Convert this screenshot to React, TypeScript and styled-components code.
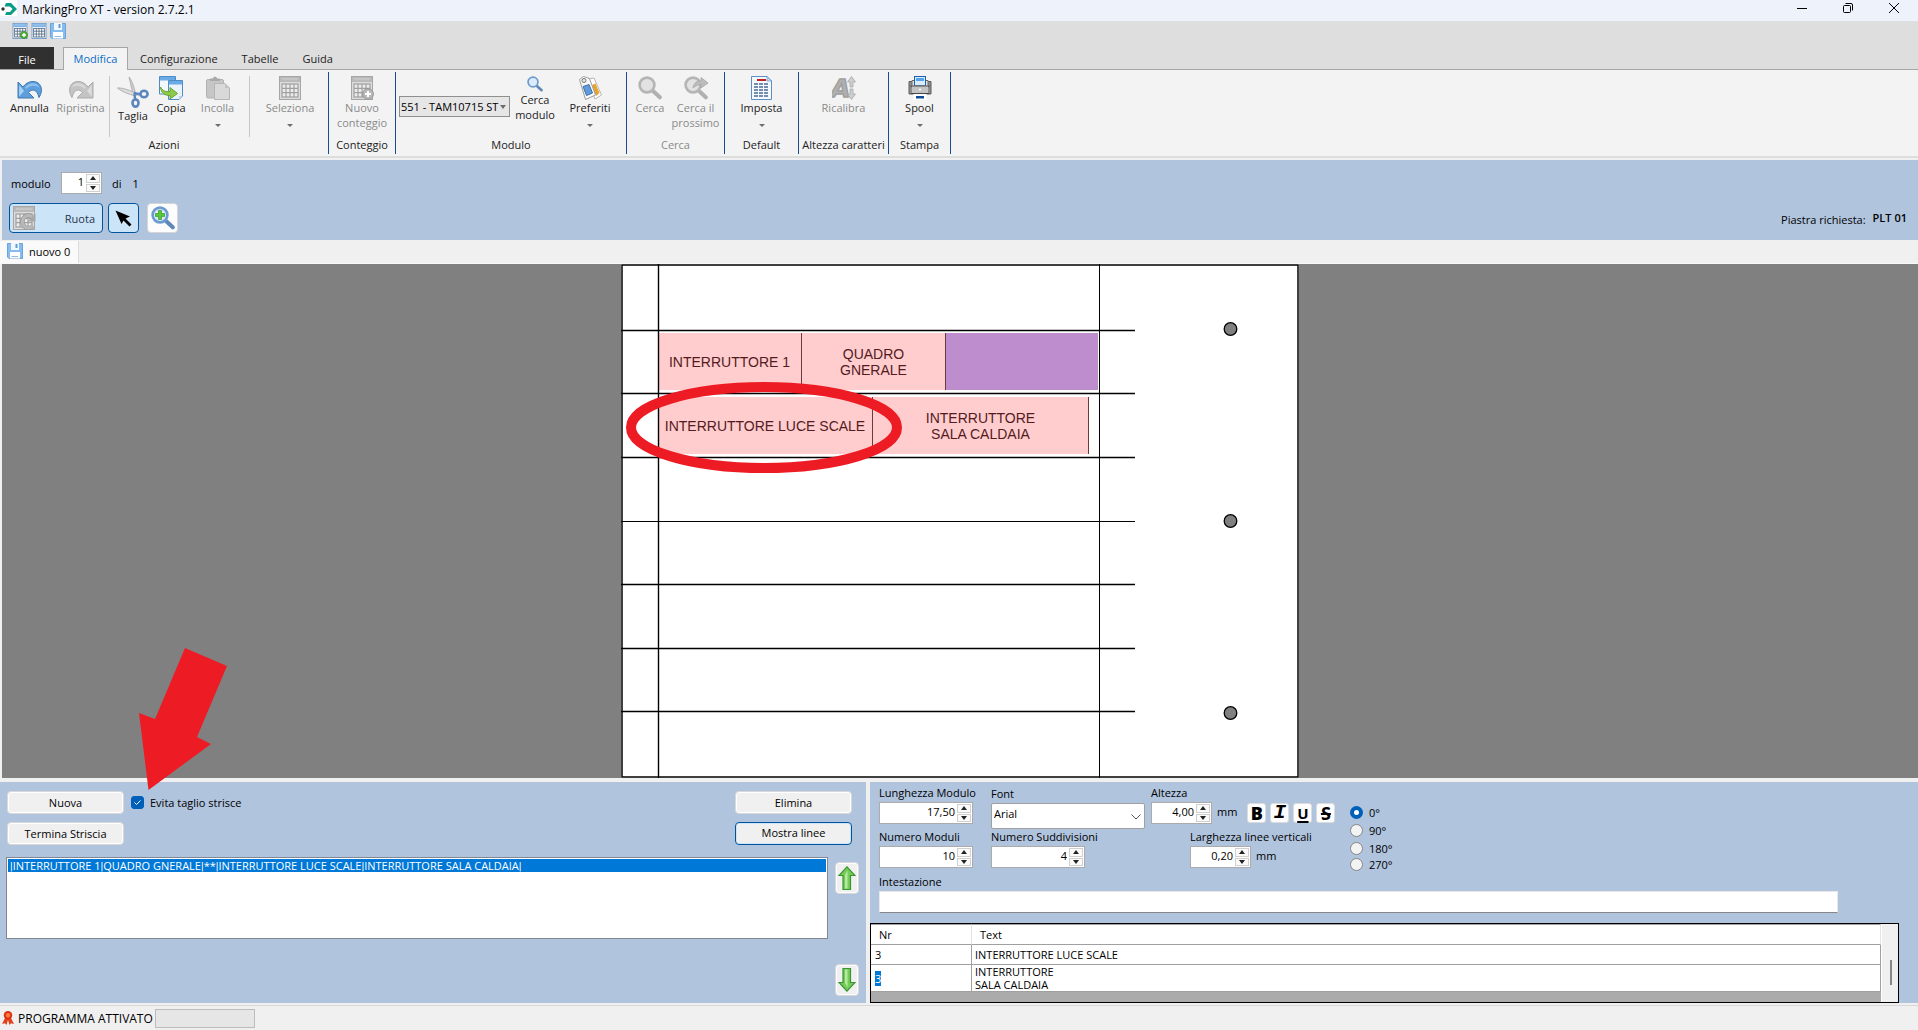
import React from 'react';
import styled, { createGlobalStyle, css } from 'styled-components';

const steel = '#b0c4de';
const ui = `"Open Sans", "Noto Sans", sans-serif`;

const Global = createGlobalStyle`
  *, *::before, *::after { box-sizing: border-box; }
  body { margin: 0; background: #f0f0f0; }
  body, button, input, select { font-family: ${ui}; font-size: 11px; line-height: 15px; color: #000; }
  button { padding: 0; margin: 0; }
  svg { display: block; flex: none; }
`;

const Window = styled.div`
  display: flex;
  flex-direction: column;
  min-height: 100vh;
`;

/* ---------- title bar ---------- */
const TitleBar = styled.header`
  display: flex;
  align-items: flex-start;
  height: 21px;
  padding-right: 8px;
  background: #eef3fb;
`;
const Title = styled.h1`
  margin: 0;
  padding: 1px 0 0 4px;
  flex: 1;
  font-size: 12px;
  line-height: 18px;
  font-weight: 400;
`;
const WindowButton = styled.button`
  display: flex;
  justify-content: center;
  align-items: center;
  width: 32px;
  height: 16px;
  margin-left: 14px;
  border: 0;
  background: none;
`;

const QuickBar = styled.div`
  display: flex;
  gap: 3px;
  height: 26px;
  padding: 2px 0 0 12px;
  background: #dedede;
`;
const QuickButton = styled.button`
  width: 16px;
  height: 16px;
  border: 0;
  background: none;
`;

/* ---------- ribbon ---------- */
const TabRow = styled.nav`
  display: flex;
  height: 23px;
  background: #dedede;
  border-bottom: 1px solid #a6a6a6;
`;
const FileTab = styled.button`
  width: 54px;
  height: 22px;
  margin-right: 9px;
  padding: 3px 0 0;
  border: 0;
  background: #303030;
  color: #fff;
`;
const Tab = styled.button<{ $active?: boolean }>`
  height: 23px;
  padding: 0 11px 1px;
  border: 1px solid transparent;
  border-bottom: 0;
  background: none;
  color: #222;
  ${p => p.$active && css`
    width: 65px;
    padding: 0 0 1px;
    background: #f3f3f3;
    border-color: #a6a6a6;
    color: #0b6cc9;
  `}
`;
const Ribbon = styled.div`
  display: flex;
  height: 88px;
  padding-top: 2px;
  background: #f3f3f3;
  border-bottom: 2px solid #dddddd;
`;
const Group = styled.section<{ $w: number }>`
  display: flex;
  flex-direction: column;
  width: ${p => p.$w}px;
  height: 82px;
  border-right: 1px solid #1b4a93;
`;
const Tools = styled.div`
  display: flex;
  justify-content: center;
  height: 65px;
  padding-top: 4px;
`;
const GroupName = styled.div<{ $off?: boolean }>`
  text-align: center;
  white-space: nowrap;
  line-height: 16px;
  color: ${p => (p.$off ? '#8a8a8a' : '#222')};
`;
const ToolSeparator = styled.div<{ $gap: number }>`
  width: 1px;
  height: 61px;
  margin: 0 ${p => p.$gap}px 0 3px;
  background: #c6c6c6;
`;
const Tool = styled.button<{ $w: number }>`
  display: flex;
  flex-direction: column;
  align-items: center;
  width: ${p => p.$w}px;
  border: 0;
  background: none;
  color: #222;
  &:disabled { color: #8a8a8a; }
`;
const ToolText = styled.span`
  line-height: 15px;
  white-space: pre;
`;
const Caret = styled.span`
  margin-top: 9px;
  border: 3px solid transparent;
  border-top-color: #6d6d6d;
  border-bottom: 0;
`;

const SelectBox = styled.div<{ $ribbon?: boolean }>`
  position: relative;
  width: ${p => (p.$ribbon ? 111 : 154)}px;
  ${p => p.$ribbon && css`margin: 20px 3px 0 0;`}
  svg {
    position: absolute;
    right: ${p => (p.$ribbon ? 4 : 4)}px;
    top: ${p => (p.$ribbon ? 9 : 11)}px;
    pointer-events: none;
  }
`;
const Select = styled.select<{ $ribbon?: boolean }>`
  display: block;
  appearance: none;
  width: 100%;
  height: ${p => (p.$ribbon ? 21 : 26)}px;
  padding: ${p => (p.$ribbon ? '0 8px 1px 1px' : '0 16px 5px 2px')};
  border: 1px solid ${p => (p.$ribbon ? '#8f8f8f' : '#a0a0a0')};
  border-radius: ${p => (p.$ribbon ? 0 : 2)}px;
  background: ${p => (p.$ribbon ? '#e6e6e6' : '#fff')};
`;

/* ---------- module toolbar ---------- */
const ModuleBar = styled.div`
  display: flex;
  justify-content: space-between;
  height: 80px;
  margin: 2px 0 0 2px;
  padding: 12px 11px 7px 7px;
  background: ${steel};
`;
const ModuleTools = styled.div`
  display: flex;
  flex-direction: column;
  justify-content: space-between;
`;
const Row = styled.div<{ $gap?: number; $align?: string }>`
  display: flex;
  gap: ${p => p.$gap || 0}px;
  align-items: ${p => p.$align || 'flex-start'};
`;
const ModuleCount = styled(Row)`
  padding-left: 2px;
`;
const ModuleLabel = styled.label`
  width: 50px;
`;
const PageTotal = styled.span`
  display: flex;
  gap: 11px;
  padding-left: 10px;
`;
const ToolButton = styled.button<{ $w: number; $on?: boolean }>`
  display: flex;
  align-items: center;
  justify-content: ${p => (p.$w > 40 ? 'space-between' : 'center')};
  width: ${p => p.$w}px;
  height: 30px;
  padding: ${p => (p.$w > 40 ? '0 7px 0 2px' : '0')};
  border: 1px solid ${p => (p.$on ? '#00549c' : '#d6d6d6')};
  border-radius: 4px;
  background: ${p => (p.$on ? '#cce4f7' : '#fdfdfd')};
  color: #26354f;
`;
const ToolButtons = styled(Row)`
  gap: 5px;
  button:last-child { margin-left: 3px; }
`;
const Plate = styled.div`
  display: flex;
  gap: 7px;
  align-items: center;
  align-self: flex-end;
  padding-bottom: 5px;
  strong { font-weight: 600; padding-bottom: 3px; }
`;

/* ---------- document ---------- */
const DocTabs = styled.div`
  display: flex;
  height: 24px;
  padding-top: 1px;
  border-bottom: 1px solid #f8f8f8;
`;
const DocTab = styled.button`
  display: flex;
  align-items: center;
  gap: 6px;
  width: 79px;
  height: 22px;
  padding: 0 0 2px 7px;
  border: 0;
  border-right: 1px solid #dcdcdc;
  background: #fafafa;
`;
const Canvas = styled.main`
  position: relative;
  z-index: 1;
  display: flex;
  justify-content: center;
  flex: 1;
  margin-left: 2px;
  background: #808080;
`;
const Sheet = styled.div`
  position: relative;
  width: 678px;
  height: 514px;
  background: #fff;
`;
const Strip = styled.div<{ $x: number; $y: number; $w: number; $tone?: string; $line?: boolean }>`
  position: absolute;
  left: ${p => p.$x}px;
  top: ${p => p.$y}px;
  width: ${p => p.$w}px;
  height: 57px;
  display: flex;
  align-items: center;
  justify-content: center;
  text-align: center;
  white-space: pre;
  font: 14px/16px "Liberation Sans", Arial, sans-serif;
  color: #541a1e;
  background: ${p => p.$tone || '#ffcdcd'};
  border-right: ${p => (p.$line ? '1px solid #6b3a3d' : '0')};
`;
const Drawing = styled.svg`
  position: absolute;
  left: 0;
  top: 0;
  overflow: visible;
`;
const Pointer = styled.svg`
  position: absolute;
  left: 137px;
  bottom: -12px;
  pointer-events: none;
`;

/* ---------- bottom panels ---------- */
const Panels = styled.div`
  display: grid;
  grid-template-columns: minmax(0, 866fr) minmax(0, 1048fr);
  gap: 4px;
  height: 221px;
  margin-top: 4px;
`;
const StripPanel = styled.section`
  display: flex;
  flex-direction: column;
  padding: 9px 6px 7px;
  background: ${steel};
`;
const StripActions = styled.div`
  display: flex;
  justify-content: space-between;
  height: 66px;
  padding: 0 8px 0 1px;
`;
const Stack = styled.div`
  display: flex;
  flex-direction: column;
  gap: 8px;
`;
const Push = styled.button<{ $focus?: boolean }>`
  width: 117px;
  height: 23px;
  padding-bottom: ${p => (p.$focus ? 3 : 0)}px;
  border: 1px solid ${p => (p.$focus ? '#00549c' : '#d8d8d8')};
  border-radius: 4px;
  background: #f0f0f0;
  box-shadow: inset 0 0 0 1px ${p => (p.$focus ? '#cce4f7' : '#fff')};
`;
const CheckLabel = styled.label`
  display: flex;
  align-items: center;
  gap: 6px;
  height: 23px;
  padding-left: 7px;
`;
const Check = styled.span`
  display: grid;
  width: 13px;
  height: 13px;
  > * { grid-area: 1 / 1; }
  input {
    appearance: none;
    width: 13px;
    height: 13px;
    margin: 0;
    border-radius: 3px;
    border: 1px solid #868686;
    background: #fff;
  }
  input:checked { background: #005fb8; border-color: #005fb8; }
  svg { pointer-events: none; }
`;
const StripBody = styled.div`
  display: flex;
  gap: 7px;
  flex: 1;
`;
const List = styled.ul`
  flex: 1;
  height: 82px;
  margin: 0;
  padding: 1px;
  list-style: none;
  border: 1px solid #828790;
  background: #fff;
  overflow: hidden;
`;
const ListItem = styled.li`
  height: 13px;
  padding-left: 2px;
  line-height: 13px;
  white-space: pre;
  color: #fff;
  background: #0078d7;
`;
const Bar = styled.span`
  font-family: Roboto, sans-serif;
`;
const Movers = styled.div`
  display: flex;
  flex-direction: column;
  justify-content: space-between;
  padding: 5px 1px 0 0;
`;
const Mover = styled.button`
  display: flex;
  align-items: center;
  justify-content: center;
  width: 24px;
  height: 32px;
  border: 1px solid #d8d8d8;
  border-radius: 4px;
  background: #f0f0f0;
  box-shadow: inset 0 0 0 1px #fff;
`;

const EditPanel = styled.section`
  display: flex;
  flex-direction: column;
  gap: 10px;
  background: ${steel};
`;
const Form = styled.div`
  display: flex;
  flex-direction: column;
  gap: 2px;
  padding: 3px 80px 0 9px;
`;
const Fields = styled.div`
  width: 471px;
`;
const Field = styled.div<{ $w?: number; $drop?: boolean }>`
  width: ${p => p.$w || 94}px;
  padding-top: ${p => (p.$drop ? 1 : 0)}px;
`;
const FieldLabel = styled.label`
  display: block;
  height: 17px;
  line-height: 15px;
  white-space: nowrap;
`;
const SpinBox = styled.div<{ $w: number }>`
  display: flex;
  width: ${p => p.$w}px;
  height: 22px;
  border: 1px solid #ababab;
  background: #fff;
  input {
    flex: 1;
    min-width: 0;
    padding: 0 2px 4px;
    border: 0;
    text-align: right;
    background: none;
  }
`;
const SpinButtons = styled.span`
  display: flex;
  flex-direction: column;
  gap: 1px;
  padding: 1px 1px 1px 0;
`;
const SpinButton = styled.button`
  display: flex;
  align-items: center;
  justify-content: center;
  width: 14px;
  flex: 1;
  min-height: 0;
  border: 1px solid #d0d0d0;
  background: #fafafa;
`;
const Unit = styled.span`
  padding: 19px 0 0 5px;
`;
const Styles = styled.div`
  display: flex;
  gap: 4px;
  padding: 18px 0 0 10px;
`;
const StyleButton = styled.button<{ $face?: string }>`
  width: 19px;
  height: 20px;
  border: 1px solid #dcdcdc;
  border-radius: 3px;
  background: #fdfdfd;
  font-family: "Open Sans", sans-serif;
  font-size: 18px;
  line-height: 16px;
  font-weight: 800;
  ${p => p.$face === 'italic' && css`font-family: "Liberation Mono", monospace; font-style: italic; font-size: 21px;`}
  ${p => p.$face === 'underline' && css`font-size: 15px; line-height: 14px; font-weight: 700; text-decoration: underline 2px; text-underline-offset: 2px;`}
  ${p => p.$face === 'strike' && css`font-weight: 700; text-decoration: line-through 2px;`}
`;
const Radios = styled.fieldset`
  display: flex;
  flex-direction: column;
  margin: 0;
  padding: 18px 0 0;
  border: 0;
  label { display: flex; align-items: center; gap: 6px; height: 18px; }
  label:last-child { height: 15px; }
  input {
    appearance: none;
    width: 13px;
    height: 13px;
    margin: 0;
    border: 1px solid #868686;
    border-radius: 50%;
    background: #f3f3f3;
  }
  input:checked { border: 4px solid #005fb8; background: #fff; }
`;
const TextInput = styled.input`
  display: block;
  width: 100%;
  height: 22px;
  padding: 0 4px;
  border: 1px solid #e8e8e8;
  border-bottom-color: #868686;
  background: #fff;
`;
const GridBox = styled.div`
  display: flex;
  flex: 1;
  margin-right: 19px;
  border: 1px solid #000;
  background: #ababab;
`;
const GridArea = styled.div`
  flex: 1;
`;
const Table = styled.table`
  width: 100%;
  border-spacing: 0;
  table-layout: fixed;
  background: #fff;
  th, td {
    padding: 0 3px;
    border-right: 1px solid #a0a0a0;
    border-bottom: 1px solid #a0a0a0;
    text-align: left;
    font-weight: 400;
    line-height: 13px;
    white-space: pre;
  }
  th { height: 21px; padding: 0 8px; border-top: 1px solid #a0a0a0; border-right-color: #e3e3e3; }
  th:first-child { width: 101px; }
  td { height: 20px; }
  td:first-child { padding-left: 4px; }
`;
const Selected = styled.span`
  color: #fff;
  background: #0078d7;
`;
const Scroll = styled.div`
  width: 17px;
  padding: 36px 0 0 8px;
  background: #f0f0f0;
  border-left: 1px solid #fff;
`;
const Thumb = styled.div`
  width: 2px;
  height: 25px;
  background: #868686;
`;

const StatusBar = styled.footer`
  display: flex;
  align-items: center;
  height: 25px;
  margin-top: 2px;
  padding-left: 2px;
  border-top: 1px solid #d8d8d8;
  font-size: 12px;
`;
const StatusText = styled.span`
  width: 136px;
  padding-left: 4px;
  white-space: nowrap;
`;
const Progress = styled.div`
  width: 100px;
  height: 19px;
  margin-left: 5px;
  border: 1px solid #bcbcbc;
  background: #e6e6e6;
`;

/* ---------- icons ---------- */
const TableIcon = ({ size = 24, blue, badge }: { size?: number; blue?: boolean; badge?: 'plus' | 'turn' }) => {
  const line = blue ? '#4a617c' : '#a0a0a0';
  return (
    <svg width={size} height={size} viewBox="0 0 24 24" fill="none">
      <rect x="1.500" y=".5" width="21" height="23" fill={blue ? '#f5f9fd' : '#dcdcdc'} stroke={blue ? '#4c7fb8' : '#a6a6a6'} />
      <rect x="2" y="1" width="20" height="5" fill={blue ? '#7db3e6' : '#b9b9b9'} />
      <path d="M4 3H20" stroke={blue ? '#b9dbf7' : '#d2d2d2'} />
      <rect x="4" y="8" width="16" height="13" fill={blue ? '#fff' : '#ececec'} stroke={line} strokeWidth="1.200" />
      <path d="M4 12.300H20M4 16.600H20M8 8V21M12 8V21M16 8V21" stroke={line} strokeWidth="1.200" />
      {badge === 'plus' && (
        <>
          <circle cx="18" cy="18" r="5.400" fill={blue ? '#4fae3a' : '#b8b8b8'} stroke={blue ? '#3a8c28' : '#969696'} />
          <path d="M18 15V21M15 18H21" stroke="#fff" strokeWidth="2" />
        </>
      )}
      {badge === 'turn' && (
        <>
          <path d="M20.500 11A6.200 6.200 0 1 0 21 20" stroke="#9a9a9a" strokeWidth="4.500" />
          <path d="M20.500 11A6.200 6.200 0 1 0 21 20" stroke="#b9b9b9" strokeWidth="3" />
          <path d="M23.500 7.500V15.500H15.500Z" fill="#a8a8a8" />
        </>
      )}
    </svg>
  );
};
const SaveIcon = () => (
  <svg width="16" height="16" viewBox="0 0 16 16">
    <path d="M.5.5H15.500V15.500H2L.5 14Z" fill="#86bdf0" stroke="#6ba3da" />
    <rect x="4" y="0" width="8" height="7" fill="#f2f8ff" />
    <rect x="8.500" y="1" width="2" height="4" fill="#5f9bd8" />
    <rect x="3" y="9" width="10" height="6.500" fill="#fff" />
    <path d="M4.500 13.500H11" stroke="#8db9e3" />
  </svg>
);
const Turn = ({ redo }: { redo?: boolean }) => (
  <svg width="26" height="24" viewBox="0 0 26 24">
    <g transform={redo ? 'translate(26 0) scale(-1 1)' : undefined}>
      <path d="M1 6V22H17L11.500 16.500C15 12.500 20 13 22 21.500C27 14 24 5.500 16 5.500C11.500 5.500 8 8 6 11Z"
        fill={redo ? '#c4c4c4' : '#5e9fdb'} stroke={redo ? '#acacac' : '#3d78b3'} />
      <path d="M2.200 9V20.500L7 15Z" fill={redo ? '#dcdcdc' : '#a9d2f5'} />
      <path d="M8 11.500C11 6.500 20 5 22.500 12C19 9 13 9 9.500 13Z" fill={redo ? '#d8d8d8' : '#8cc1ef'} />
    </g>
  </svg>
);
const Scissors = () => (
  <svg width="32" height="32" viewBox="0 0 32 32" fill="none">
    <path d="M12 1C14 3 17.500 11 18.500 18L15.500 16Z" fill="#d0d0d0" stroke="#a5a5a5" strokeWidth=".8" />
    <path d="M.5 12C4 11.500 14 14 21 18.500L18 20C12 18 5 16 .5 12Z" fill="#dcdcdc" stroke="#a5a5a5" strokeWidth=".8" />
    <ellipse cx="27" cy="18" rx="3.600" ry="3.200" stroke="#5b87bd" strokeWidth="2.600" />
    <ellipse cx="18.500" cy="27" rx="3" ry="3.600" stroke="#5b87bd" strokeWidth="2.600" />
    <path d="M17 17L23.500 18.500M17.500 17L18 23" stroke="#5b87bd" strokeWidth="2.400" />
  </svg>
);
const CopyIcon = () => (
  <svg width="24" height="24" viewBox="0 0 24 24">
    <path d="M.5.5H16.500V18H.5Z" fill="#f3f8fd" stroke="#4e8ac6" />
    <rect x="1" y="1" width="15" height="3.500" fill="#6aaae6" />
    <path d="M9.500 4.500H23.500V20L20 23.500H9.500Z" fill="#eaf3fc" stroke="#4e8ac6" />
    <rect x="10" y="5" width="13" height="3.500" fill="#6aaae6" />
    <path d="M23.500 20H20V23.500Z" fill="#b8d3ee" />
    <path d="M1.500 11C4 15.500 7 15.800 11 15.500V11.500L18.500 17.500L11 23V19.500C5.500 19.500 2 17 1.500 11Z" fill="#8ccb4a" stroke="#6aa32f" />
  </svg>
);
const PasteIcon = () => (
  <svg width="24" height="24" viewBox="0 0 24 24">
    <rect x=".5" y="3.500" width="17" height="18.500" rx="1.500" fill="#c6c6c6" stroke="#b2b2b2" />
    <path d="M4 5V2.500H7C7 0 11 0 11 2.500H14V5Z" fill="#a9a9a9" />
    <path d="M8.500 7.500H19L23.500 12V23.500H8.500Z" fill="#d9d9d9" stroke="#b5b5b5" />
    <path d="M19 7.500V12H23.500Z" fill="#c2c2c2" />
  </svg>
);
const Lens = ({ size = 24, tone = 'grey', next, plus }: { size?: number; tone?: 'grey' | 'blue'; next?: boolean; plus?: boolean }) => {
  const ring = tone === 'grey' ? '#b5b5b5' : '#6c9bd0';
  return (
    <svg width={size} height={size} viewBox="0 0 24 24" fill="none">
      <path d="M14.500 14.500L21.800 21.300" stroke={tone === 'grey' ? '#b0b0b0' : '#6089ba'} strokeWidth="4" strokeLinecap="round" />
      <circle cx="9" cy="9" r="7.400" fill={tone === 'grey' ? '#e2e2e2' : '#dceafa'} stroke={ring} strokeWidth="2.600" />
      {next && (
        <path d="M9 12C10 6.500 13 5 17 5V1.500L24 7L17 12V8.500C14 8.500 12 9.500 9 12Z" fill="#bdbdbd" stroke="#a5a5a5" strokeWidth=".8" />
      )}
      {plus && <path d="M7.500 4.500H10.500V7.500H13.500V10.500H10.500V13.500H7.500V10.500H4.500V7.500H7.500Z" fill="#57c834" stroke="#35982a" strokeWidth=".7" />}
    </svg>
  );
};
const Tags = () => (
  <svg width="24" height="24" viewBox="0 0 24 24" fill="none">
    <path d="M9 3L16 2L23.500 19L17 23Z" fill="#fff" stroke="#b5b5b5" />
    <path d="M14 9L17.500 7.500L21.500 17L18 20Z" fill="#e8a32d" />
    <path d="M1.500 3.500L5.500.5L11.500 2.500L17.500 19L7.500 23.500Z" fill="#fafafa" stroke="#9c9c9c" />
    <circle cx="6" cy="4.500" r="2" fill="#e6e6e6" stroke="#777" />
    <path d="M5 10.500L11 8.500L14.500 17L8.500 19.500Z" fill="#5f9bdb" stroke="#3c6fa8" />
  </svg>
);
const ListDoc = () => (
  <svg width="21" height="24" viewBox="0 0 21 24" fill="none">
    <path d="M.5.5H16L20.500 5V23.500H.5Z" fill="#f4f9fe" stroke="#5b8fc7" />
    <path d="M16 .5V5H20.500Z" fill="#cfe1f3" stroke="#5b8fc7" strokeWidth=".7" />
    <path d="M6 4H15" stroke="#c22020" strokeWidth="2" />
    <path d="M3 8H18M3 11H18M3 14H18M3 17H18M3 20H18" stroke="#4b6a96" strokeWidth="1.400" strokeDasharray="4 1" />
  </svg>
);
const FontSize = () => (
  <svg width="24" height="24" viewBox="0 0 24 24">
    <text x="-1" y="21" fontFamily="DejaVu Sans, sans-serif" fontWeight="700" fontStyle="italic" fontSize="25" fill="#b0b0b0" stroke="#a0a0a0" strokeWidth="1.500">A</text>
    <path d="M19.500.5L23.500 6H21V11H18V6H15.500ZM19.500 23.500L15.500 18H18V13H21V18H23.500Z" fill="#cdcdcd" stroke="#a8a8a8" strokeWidth=".8" />
  </svg>
);
const Printer = () => (
  <svg width="24" height="24" viewBox="0 0 24 24">
    <path d="M1 5.500H23V18H1Z" fill="#8f8f8f" stroke="#5f5f5f" />
    <path d="M4 4.500H20V12H4Z" fill="#e2e2e2" stroke="#6a6a6a" />
    <rect x="6.500" y=".5" width="11" height="9" fill="#d9ecfd" stroke="#1d5fa8" />
    <rect x="8" y="2" width="8" height="3" fill="#58a3ea" />
    <path d="M4 9.500H20V17H4Z" fill="#c4c4c4" />
    <path d="M2 10H22" stroke="#555" />
    <circle cx="12" cy="13.500" r="1" fill="#fff" />
    <path d="M3 17.500H21" stroke="#444" />
    <path d="M5.500 18H18.500V24H5.500Z" fill="#fff" />
    <rect x="8" y="20" width="8" height="2.500" fill="#0b4a94" />
  </svg>
);
const Cursor = () => (
  <svg width="17" height="17" viewBox="0 0 17 17">
    <path d="M.5.5L15 6.500L10.500 8.500L16.500 14.500L14.500 16.500L8.500 10.500L6.500 14Z" />
  </svg>
);
const GreenArrow = ({ down }: { down?: boolean }) => (
  <svg width="18" height="24" viewBox="0 0 18 24">
    <g transform={down ? 'translate(0 24) scale(1 -1)' : undefined}>
      <path d="M9 .8L17 9.500H12.500V23.500H5V9.500H1Z" fill="#74cc59" stroke="#3a9433" strokeWidth="1.200" />
      <path d="M7 9V22.500H9.500V4.500Z" fill="#b5eba0" />
    </g>
  </svg>
);
const Logo = () => (
  <svg width="18" height="16" viewBox="0 0 18 16">
    <rect width="17" height="16" fill="#fff" />
    <circle cx="3" cy="9" r="1.700" fill="#333" />
    <path d="M6 3H11L17 9L11 15H5L6.500 12H10L12.500 9L10 6.500H4.500Z" fill="#0a9c86" />
  </svg>
);
const Rosette = () => (
  <svg width="12" height="14" viewBox="0 0 12 14">
    <path d="M3 7L0 13L3 12.300L4.500 14L6 9L7.500 14L9 12.300L12 13L9 7Z" fill="#e0401c" />
    <circle cx="6" cy="4.300" r="4.200" fill="#d93214" />
    <circle cx="6" cy="4.300" r="2.200" fill="#ff7a3c" />
  </svg>
);
const SpinMark = ({ down }: { down?: boolean }) => (
  <svg width="6" height="4" viewBox="0 0 6 4">
    <path d={down ? 'M0 0H6L3 4Z' : 'M0 4H6L3 0Z'} fill="#222" />
  </svg>
);

const Spinner = ({ id, value, w = 94 }: { id: string; value: string; w?: number }) => (
  <SpinBox $w={w}>
    <input id={id} defaultValue={value} />
    <SpinButtons>
      <SpinButton aria-label="Aumenta"><SpinMark /></SpinButton>
      <SpinButton aria-label="Diminuisci"><SpinMark down /></SpinButton>
    </SpinButtons>
  </SpinBox>
);

const Action = ({ w, icon, text, off, menu }: { w: number; icon: React.ReactNode; text: string; off?: boolean; menu?: boolean }) => (
  <Tool $w={w} disabled={off}>
    {icon}
    <ToolText>{text}</ToolText>
    {menu && <Caret />}
  </Tool>
);

const rules = [66, 129, 193, 257, 320, 384, 447];
const holes = [65, 257, 449];
const angles = ['0°', '90°', '180°', '270°'];
const modules = ['INTERRUTTORE 1', 'QUADRO GNERALE', '**', 'INTERRUTTORE LUCE SCALE', 'INTERRUTTORE SALA CALDAIA'];

export default function App() {
  return (
    <Window>
      <Global />
      <TitleBar>
        <Logo />
        <Title>MarkingPro XT - version 2.7.2.1</Title>
        <WindowButton aria-label="Riduci">
          <svg width="10" height="10"><path d="M0 5.500H10" stroke="#000" /></svg>
        </WindowButton>
        <WindowButton aria-label="Ripristina finestra">
          <svg width="10" height="10" fill="none" stroke="#000"><rect x=".5" y="2.500" width="7" height="7" rx="1" /><path d="M2.500.5H8A1.500 1.500 0 0 1 9.500 2V7.500" /></svg>
        </WindowButton>
        <WindowButton aria-label="Chiudi">
          <svg width="10" height="10"><path d="M0 0L10 10M10 0L0 10" stroke="#000" /></svg>
        </WindowButton>
      </TitleBar>
      <QuickBar>
        <QuickButton aria-label="Nuovo modulo"><TableIcon size={16} blue badge="plus" /></QuickButton>
        <QuickButton aria-label="Apri"><TableIcon size={16} blue /></QuickButton>
        <QuickButton aria-label="Salva"><SaveIcon /></QuickButton>
      </QuickBar>
      <TabRow>
        <FileTab>File</FileTab>
        <Tab $active>Modifica</Tab>
        <Tab>Configurazione</Tab>
        <Tab>Tabelle</Tab>
        <Tab>Guida</Tab>
      </TabRow>

      <Ribbon>
        <Group $w={329}>
          <Tools>
            <Action w={51} icon={<Turn />} text="Annulla" />
            <Action w={51} icon={<Turn redo />} text="Ripristina" off />
            <ToolSeparator $gap={3} />
            <Action w={40} icon={<Scissors />} text="Taglia" />
            <Action w={36} icon={<CopyIcon />} text="Copia" />
            <Action w={57} icon={<PasteIcon />} text="Incolla" off menu />
            <ToolSeparator $gap={6} />
            <Action w={68} icon={<TableIcon />} text="Seleziona" off menu />
          </Tools>
          <GroupName>Azioni</GroupName>
        </Group>
        <Group $w={67}>
          <Tools><Action w={64} icon={<TableIcon badge="plus" />} text={'Nuovo\nconteggio'} off /></Tools>
          <GroupName>Conteggio</GroupName>
        </Group>
        <Group $w={231}>
          <Tools>
            <SelectBox $ribbon>
              <Select $ribbon aria-label="Modulo"><option>551 - TAM10715 ST</option></Select>
              <svg width="6" height="4"><path d="M0 0H6L3 4Z" fill="#6d6d6d" /></svg>
            </SelectBox>
            <Action w={44} icon={<Lens size={16} tone="blue" />} text={'Cerca\nmodulo'} />
            <Action w={66} icon={<Tags />} text="Preferiti" menu />
          </Tools>
          <GroupName>Modulo</GroupName>
        </Group>
        <Group $w={98}>
          <Tools>
            <Action w={40} icon={<Lens />} text="Cerca" off />
            <Action w={51} icon={<Lens next />} text={'Cerca il\nprossimo'} off />
          </Tools>
          <GroupName $off>Cerca</GroupName>
        </Group>
        <Group $w={74}>
          <Tools><Action w={60} icon={<ListDoc />} text="Imposta" menu /></Tools>
          <GroupName>Default</GroupName>
        </Group>
        <Group $w={90}>
          <Tools><Action w={60} icon={<FontSize />} text="Ricalibra" off /></Tools>
          <GroupName>Altezza caratteri</GroupName>
        </Group>
        <Group $w={62}>
          <Tools><Action w={50} icon={<Printer />} text="Spool" menu /></Tools>
          <GroupName>Stampa</GroupName>
        </Group>
      </Ribbon>

      <ModuleBar>
        <ModuleTools>
          <ModuleCount $align="center">
            <ModuleLabel htmlFor="page">modulo</ModuleLabel>
            <Spinner id="page" value="1" w={41} />
            <PageTotal><span>di</span><span>1</span></PageTotal>
          </ModuleCount>
          <ToolButtons>
            <ToolButton $w={94} $on><TableIcon badge="turn" />Ruota</ToolButton>
            <ToolButton $w={31} $on aria-label="Selezione"><Cursor /></ToolButton>
            <ToolButton $w={31} aria-label="Ingrandisci"><Lens tone="blue" plus /></ToolButton>
          </ToolButtons>
        </ModuleTools>
        <Plate><span>Piastra richiesta:</span><strong>PLT 01</strong></Plate>
      </ModuleBar>

      <DocTabs>
        <DocTab><SaveIcon />nuovo 0</DocTab>
      </DocTabs>

      <Canvas>
        <Sheet>
          <Strip $x={37} $y={69} $w={144} $line>INTERRUTTORE 1</Strip>
          <Strip $x={181} $y={69} $w={144} $line>{'QUADRO\nGNERALE'}</Strip>
          <Strip $x={325} $y={69} $w={152} $tone="#be8dce" />
          <Strip $x={37} $y={133} $w={215} $line>INTERRUTTORE LUCE SCALE</Strip>
          <Strip $x={252} $y={133} $w={216} $line>{'INTERRUTTORE\nSALA CALDAIA'}</Strip>
          <Drawing width="678" height="514" fill="none" stroke="#000">
            <rect x="1" y="1" width="676" height="512" strokeWidth="1.500" />
            <path d="M37.500 0V514" strokeWidth="1.400" />
            <path d="M478.500 0V514" />
            {rules.map(y => (
              <path key={y} d={`M0 ${y}.500H514`} strokeWidth={y === 257 ? 1 : 1.6} />
            ))}
            {holes.map(y => (
              <circle key={y} cx="609.500" cy={y} r="6.300" fill="#808080" strokeWidth="1.300" />
            ))}
            <ellipse cx="143" cy="163.500" rx="133" ry="40.500" stroke="#ed1c24" strokeWidth="10" />
          </Drawing>
        </Sheet>
        <Pointer width="89" height="142" viewBox="0 0 89 142">
          <path d="M46 0L88 18L58 89L72 96L9.500 142L0 65L16 71Z" fill="#ed1c24" />
        </Pointer>
      </Canvas>

      <Panels>
        <StripPanel>
          <StripActions>
            <Row>
              <Stack>
                <Push>Nuova</Push>
                <Push>Termina Striscia</Push>
              </Stack>
              <CheckLabel>
                <Check>
                  <input type="checkbox" defaultChecked />
                  <svg width="13" height="13" fill="none" stroke="#fff"><path d="M3.500 6.500L5.500 8.500L9.500 4.500" /></svg>
                </Check>
                Evita taglio strisce
              </CheckLabel>
            </Row>
            <Stack>
              <Push>Elimina</Push>
              <Push $focus>Mostra linee</Push>
            </Stack>
          </StripActions>
          <StripBody>
            <List>
              <ListItem>
                <Bar>|</Bar>
                {modules.map(m => (
                  <React.Fragment key={m}>{m}<Bar>|</Bar></React.Fragment>
                ))}
              </ListItem>
            </List>
            <Movers>
              <Mover aria-label="Sposta su"><GreenArrow /></Mover>
              <Mover aria-label="Sposta giù"><GreenArrow down /></Mover>
            </Movers>
          </StripBody>
        </StripPanel>

        <EditPanel>
          <Form>
            <Row>
              <Fields>
                <Row>
                  <Row $gap={18}>
                    <Field>
                      <FieldLabel htmlFor="len">Lunghezza Modulo</FieldLabel>
                      <Spinner id="len" value="17,50" />
                    </Field>
                    <Field $w={160} $drop>
                      <FieldLabel htmlFor="font">Font</FieldLabel>
                      <SelectBox>
                        <Select id="font"><option>Arial</option></Select>
                        <svg width="10" height="6" fill="none" stroke="#555"><path d="M.5.5L5 5L9.500.5" /></svg>
                      </SelectBox>
                    </Field>
                  </Row>
                  <Field $w={61}>
                    <FieldLabel htmlFor="height">Altezza</FieldLabel>
                    <Spinner id="height" value="4,00" w={61} />
                  </Field>
                  <Unit>mm</Unit>
                  <Styles>
                    <StyleButton aria-label="Grassetto">B</StyleButton>
                    <StyleButton aria-label="Corsivo" $face="italic">I</StyleButton>
                    <StyleButton aria-label="Sottolineato" $face="underline">U</StyleButton>
                    <StyleButton aria-label="Barrato" $face="strike">S</StyleButton>
                  </Styles>
                </Row>
                <Row>
                  <Row $gap={18}>
                    <Field>
                      <FieldLabel htmlFor="count">Numero Moduli</FieldLabel>
                      <Spinner id="count" value="10" />
                    </Field>
                    <Field $w={199}>
                      <FieldLabel htmlFor="sub">Numero Suddivisioni</FieldLabel>
                      <Spinner id="sub" value="4" />
                    </Field>
                  </Row>
                  <Field $w={61}>
                    <FieldLabel htmlFor="line">Larghezza linee verticali</FieldLabel>
                    <Spinner id="line" value="0,20" w={61} />
                  </Field>
                  <Unit>mm</Unit>
                </Row>
              </Fields>
              <Radios aria-label="Rotazione">
                {angles.map((a, i) => (
                  <label key={a}><input type="radio" name="angle" defaultChecked={i === 0} />{a}</label>
                ))}
              </Radios>
            </Row>
            <div>
              <FieldLabel htmlFor="head">Intestazione</FieldLabel>
              <TextInput id="head" />
            </div>
          </Form>
          <GridBox>
            <GridArea>
              <Table>
                <thead><tr><th>Nr</th><th>Text</th></tr></thead>
                <tbody>
                  <tr><td>3</td><td>INTERRUTTORE LUCE SCALE</td></tr>
                  <tr><td><Selected>3</Selected></td><td>{'INTERRUTTORE\nSALA CALDAIA'}</td></tr>
                </tbody>
              </Table>
            </GridArea>
            <Scroll><Thumb /></Scroll>
          </GridBox>
        </EditPanel>
      </Panels>

      <StatusBar>
        <Rosette />
        <StatusText>PROGRAMMA ATTIVATO</StatusText>
        <Progress />
      </StatusBar>
    </Window>
  );
}
